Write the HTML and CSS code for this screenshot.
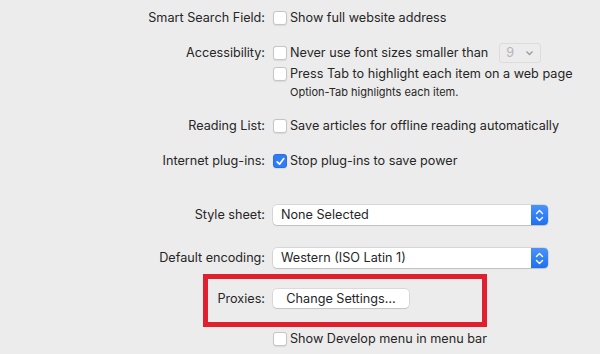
FILE: index.html
```html
<!DOCTYPE html>
<html lang="en">
<head>
  <meta charset="UTF-8" />
  <title>Advanced</title>
  <link rel="stylesheet" href="styles.css">
</head>
<body>
  <div class="prefs">
    <div class="row r-search">
      <span class="label">Smart Search Field:</span>
      <label class="check"><span class="box"></span>Show full website address</label>
    </div>

    <div class="row r-access">
      <span class="label">Accessibility:</span>
      <label class="check"><span class="box"></span>Never use font sizes smaller than
        <span class="mini-pop"><span class="num">9</span>
          <svg width="9" height="6" viewBox="0 0 9 6"><path d="M1.5 1.5 L4.5 4.5 L7.5 1.5" fill="none" stroke="#9a9a9a" stroke-width="1.3"/></svg>
        </span>
      </label>
    </div>
    <div class="row r-tab">
      <span class="label"></span>
      <label class="check"><span class="box"></span>Press Tab to highlight each item on a web page</label>
    </div>
    <div class="row note">
      <span class="label"></span>
      <span class="hint">Option-Tab highlights each item.</span>
    </div>

    <div class="row r-reading">
      <span class="label">Reading List:</span>
      <label class="check"><span class="box"></span>Save articles for offline reading automatically</label>
    </div>

    <div class="row r-plugins">
      <span class="label">Internet plug-ins:</span>
      <label class="check"><span class="box on">
        <svg width="11" height="11" viewBox="0 0 11 11"><path d="M2.2 5.8 L4.5 8.2 L8.8 2.6" fill="none" stroke="#fff" stroke-width="1.7" stroke-linecap="round" stroke-linejoin="round"/></svg>
      </span>Stop plug-ins to save power</label>
    </div>

    <div class="row r-style">
      <span class="label">Style sheet:</span>
      <div class="popup"><span class="value">None Selected</span>
        <span class="stepper"><svg width="9" height="13" viewBox="0 0 9 13"><path d="M1.5 4.5 L4.5 1.5 L7.5 4.5 M1.5 8.5 L4.5 11.5 L7.5 8.5" fill="none" stroke="#fff" stroke-width="1.4" stroke-linecap="round" stroke-linejoin="round"/></svg></span>
      </div>
    </div>

    <div class="row r-encoding">
      <span class="label">Default encoding:</span>
      <div class="popup"><span class="value">Western (ISO Latin 1)</span>
        <span class="stepper"><svg width="9" height="13" viewBox="0 0 9 13"><path d="M1.5 4.5 L4.5 1.5 L7.5 4.5 M1.5 8.5 L4.5 11.5 L7.5 8.5" fill="none" stroke="#fff" stroke-width="1.4" stroke-linecap="round" stroke-linejoin="round"/></svg></span>
      </div>
    </div>

    <div class="row r-proxies highlight">
      <span class="label">Proxies:</span>
      <div><button class="btn">Change Settings…</button></div>
    </div>

    <div class="row r-develop">
      <span class="label"></span>
      <label class="check"><span class="box"></span>Show Develop menu in menu bar</label>
    </div>
  </div>
</body>
</html>
```

FILE: styles.css
```css
/* macOS Safari prefs, Advanced pane */
:root {
  --bg: #ececec;
  --text: #262626;
  --blue: #2f7cf6;
  --red: #e0202e;
}
*, *::before, *::after {
  box-sizing: border-box;
  margin: 0;
  padding: 0;
}
body {
  background: var(--bg);
  color: var(--text);
  font-family: Inter, "Noto Sans", "Liberation Sans", sans-serif;
  font-size: 12.65px;
}
.prefs {
  padding-top: 8px;
}
.row {
  display: grid;
  grid-template-columns: 265px 1fr;
  column-gap: 8px;
  align-items: center;
  min-height: 20px;
  line-height: 20px;
}
.label {
  text-align: right;
}
.check {
  display: flex;
  align-items: center;
  gap: 3px;
}
.box {
  width: 14px;
  height: 14px;
  background: #fff;
  border: 1px solid #c6c6c6;
  border-radius: 3px;
  box-shadow: 0 0.5px 1px rgba(0, 0, 0, 0.08);
  display: flex;
  align-items: center;
  justify-content: center;
  flex: none;
}
.box.on {
  background: var(--blue);
  border-color: #2a6fe0;
}
.mini-pop {
  margin-left: 8px;
  width: 42px;
  height: 20px;
  border: 1px solid #dcdcdc;
  border-radius: 3px;
  display: flex;
  align-items: center;
  justify-content: space-between;
  padding: 0 6px 0 6px;
  color: #b5b5b5;
}
.note {
  line-height: 16px;
  min-height: 16px;
}
.hint {
  font-size: 11px;
  padding-left: 17px;
}

.r-access { margin-top: 15px; }
.r-tab { margin-top: 1px; }
.r-reading { margin-top: 16px; }
.r-plugins { margin-top: 15px; }
.r-style { margin-top: 34px; }
.r-encoding { margin-top: 23px; }
.r-proxies { margin-top: 21px; }
.r-develop { margin-top: 20px; }

.popup {
  width: 275px;
  height: 20px;
  background: #fff;
  border-radius: 4px;
  box-shadow: 0 0 0 0.5px rgba(0, 0, 0, 0.18), 0 1px 1px rgba(0, 0, 0, 0.1);
  display: flex;
  align-items: center;
  justify-content: space-between;
  padding-left: 8px;
}
.stepper {
  width: 17px;
  height: 20px;
  background: linear-gradient(#4a93fb, #1f6ff0);
  border-radius: 0 4px 4px 0;
  display: flex;
  align-items: center;
  justify-content: center;
}
.btn {
  font-family: inherit;
  font-size: 12.65px;
  color: var(--text);
  background: #fff;
  border: none;
  border-radius: 4px;
  box-shadow: 0 0 0 0.5px rgba(0, 0, 0, 0.16), 0 1px 1px rgba(0, 0, 0, 0.1);
  height: 19px;
  width: 136px;
  line-height: 19px;
}
.highlight {
  position: relative;
}
.highlight::after {
  content: "";
  position: absolute;
  left: 203px;
  width: 284px;
  top: -15px;
  height: 53px;
  border: 5px solid var(--red);
  pointer-events: none;
}
```
